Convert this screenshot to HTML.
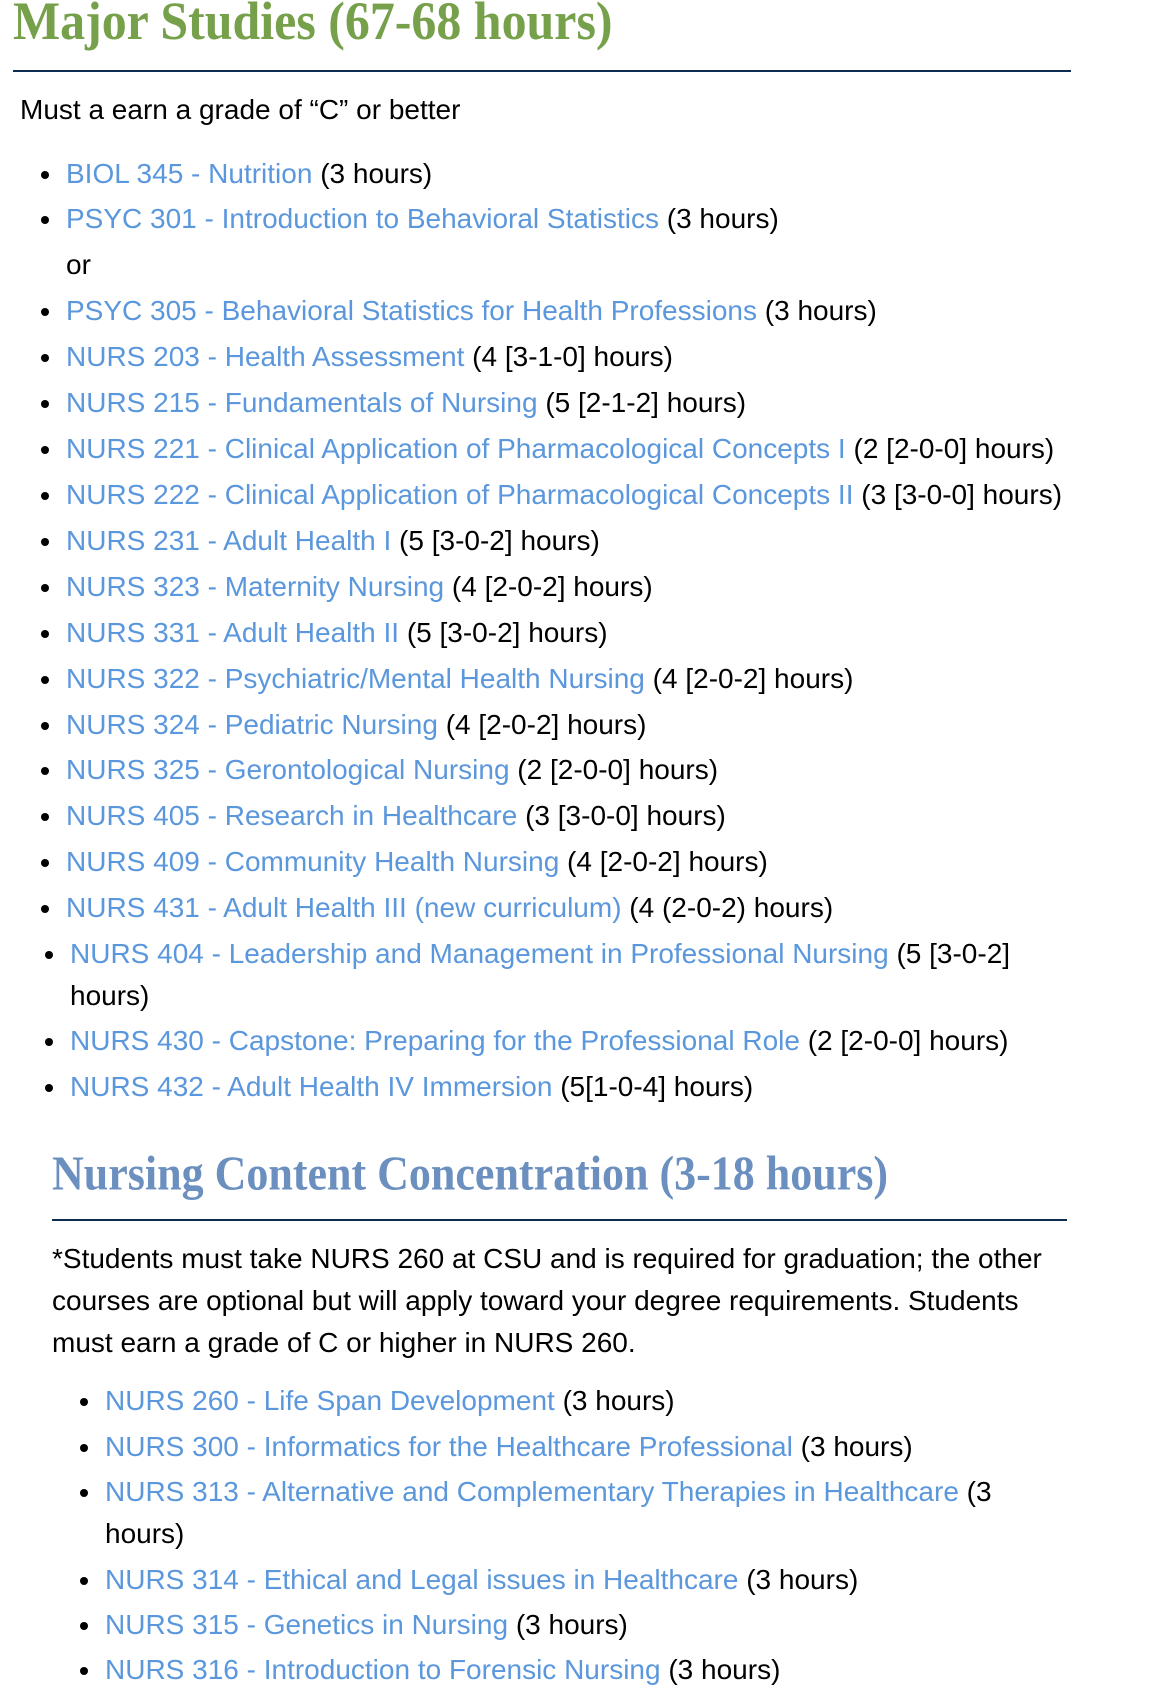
<!DOCTYPE html>
<html><head><meta charset="utf-8"><style>
body{margin:0;width:1164px;height:1700px;background:#fff;position:relative;overflow:hidden;font-family:"Liberation Sans",Arial,sans-serif;font-size:28px;color:#000}
.l{position:absolute;white-space:nowrap;line-height:32px;height:32px}
a{color:#5b97dc;text-decoration:none}
.b::before{content:"";position:absolute;left:-25px;top:13px;width:8px;height:8px;border-radius:50%;background:#000}
h1,h2{position:absolute;margin:0;font-family:"Liberation Serif",serif;font-weight:bold;white-space:nowrap;transform-origin:left center}
.r{position:absolute;height:2px;background:#0d2d50}
</style></head><body>
<h1 style="left:13px;top:-6px;font-size:48px;color:#76a04a;line-height:56px;transform:scale(1.04,1.12)">Major Studies (67-68 hours)</h1>
<div class="r" style="left:13px;top:70px;width:1058px"></div>
<div class="l" style="left:20px;top:94px">Must a earn a grade of “C” or better</div>
<div class="l b" style="left:66px;top:158px"><a>BIOL 345 - Nutrition</a> (3 hours)</div>
<div class="l b" style="left:66px;top:203px"><a>PSYC 301 - Introduction to Behavioral Statistics</a> (3 hours)</div>
<div class="l" style="left:66px;top:249px">or</div>
<div class="l b" style="left:66px;top:295px"><a>PSYC 305 - Behavioral Statistics for Health Professions</a> (3 hours)</div>
<div class="l b" style="left:66px;top:341px"><a>NURS 203 - Health Assessment</a> (4 [3-1-0] hours)</div>
<div class="l b" style="left:66px;top:387px"><a>NURS 215 - Fundamentals of Nursing</a> (5 [2-1-2] hours)</div>
<div class="l b" style="left:66px;top:433px"><a>NURS 221 - Clinical Application of Pharmacological Concepts I</a> (2 [2-0-0] hours)</div>
<div class="l b" style="left:66px;top:479px"><a>NURS 222 - Clinical Application of Pharmacological Concepts II</a> (3 [3-0-0] hours)</div>
<div class="l b" style="left:66px;top:525px"><a>NURS 231 - Adult Health I</a> (5 [3-0-2] hours)</div>
<div class="l b" style="left:66px;top:571px"><a>NURS 323 - Maternity Nursing</a> (4 [2-0-2] hours)</div>
<div class="l b" style="left:66px;top:617px"><a>NURS 331 - Adult Health II</a> (5 [3-0-2] hours)</div>
<div class="l b" style="left:66px;top:663px"><a>NURS 322 - Psychiatric/Mental Health Nursing</a> (4 [2-0-2] hours)</div>
<div class="l b" style="left:66px;top:709px"><a>NURS 324 - Pediatric Nursing</a> (4 [2-0-2] hours)</div>
<div class="l b" style="left:66px;top:754px"><a>NURS 325 - Gerontological Nursing</a> (2 [2-0-0] hours)</div>
<div class="l b" style="left:66px;top:800px"><a>NURS 405 - Research in Healthcare</a> (3 [3-0-0] hours)</div>
<div class="l b" style="left:66px;top:846px"><a>NURS 409 - Community Health Nursing</a> (4 [2-0-2] hours)</div>
<div class="l b" style="left:66px;top:892px"><a>NURS 431 - Adult Health III (new curriculum)</a> (4 (2-0-2) hours)</div>
<div class="l b" style="left:70px;top:938px"><a>NURS 404 - Leadership and Management in Professional Nursing</a> (5 [3-0-2]</div>
<div class="l" style="left:70px;top:980px">hours)</div>
<div class="l b" style="left:70px;top:1025px"><a>NURS 430 - Capstone: Preparing for the Professional Role</a> (2 [2-0-0] hours)</div>
<div class="l b" style="left:70px;top:1071px"><a>NURS 432 - Adult Health IV Immersion</a> (5[1-0-4] hours)</div>
<h2 style="left:52px;top:1146px;font-size:44px;color:#6b8fbf;line-height:56px;transform:scaleY(1.1)">Nursing Content Concentration (3-18 hours)</h2>
<div class="r" style="left:52px;top:1219px;width:1015px"></div>
<div class="l" style="left:52px;top:1243px">*Students must take NURS 260 at CSU and is required for graduation; the other</div>
<div class="l" style="left:52px;top:1285px">courses are optional but will apply toward your degree requirements. Students</div>
<div class="l" style="left:52px;top:1327px">must earn a grade of C or higher in NURS 260.</div>
<div class="l b" style="left:105px;top:1385px"><a>NURS 260 - Life Span Development</a> (3 hours)</div>
<div class="l b" style="left:105px;top:1431px"><a>NURS 300 - Informatics for the Healthcare Professional</a> (3 hours)</div>
<div class="l b" style="left:105px;top:1476px"><a>NURS 313 - Alternative and Complementary Therapies in Healthcare</a> (3</div>
<div class="l" style="left:105px;top:1518px">hours)</div>
<div class="l b" style="left:105px;top:1564px"><a>NURS 314 - Ethical and Legal issues in Healthcare</a> (3 hours)</div>
<div class="l b" style="left:105px;top:1609px"><a>NURS 315 - Genetics in Nursing</a> (3 hours)</div>
<div class="l b" style="left:105px;top:1654px"><a>NURS 316 - Introduction to Forensic Nursing</a> (3 hours)</div>
</body></html>
